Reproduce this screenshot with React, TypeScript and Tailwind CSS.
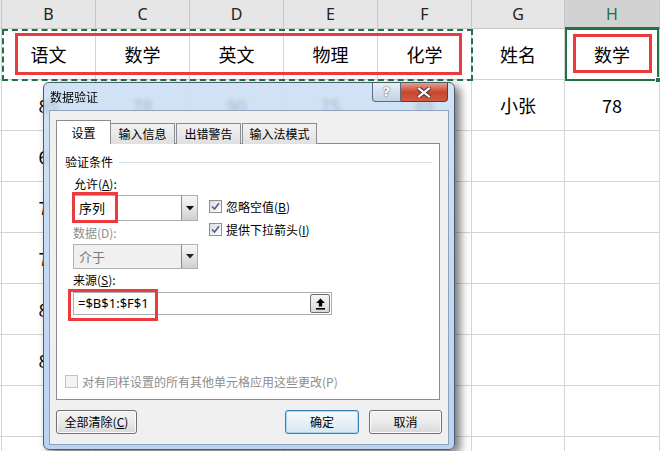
import React from "react";

const CJK = { fontFamily: '"Noto Sans CJK SC", "Noto Sans", sans-serif' };
const UI = { fontFamily: '"Noto Sans CJK SC", "Noto Sans", sans-serif' };

const headers = ["", "B", "C", "D", "E", "F", "G", "H"];
const rows: string[][] = [
  ["", "语文", "数学", "英文", "物理", "化学", "姓名", "数学"],
  ["", "85", "78", "90", "75", "88", "小张", "78"],
  ["", "68", "82", "", "", "", "", ""],
  ["", "72", "", "", "", "", "", ""],
  ["", "76", "", "", "", "", "", ""],
  ["", "88", "", "", "", "", "", ""],
  ["", "80", "", "", "", "", "", ""],
  ["", "", "", "", "", "", "", ""],
  ["", "", "", "", "", "", "", ""],
];

function Checkbox({ checked, disabled }: { checked?: boolean; disabled?: boolean }) {
  return (
    <div
      className={
        "w-[13px] h-[13px] border flex items-center justify-center shrink-0 " +
        (disabled
          ? "border-[#c3c3c3] bg-[#f4f4f4]"
          : "border-[#8e8f8f] bg-gradient-to-br from-[#dcdcdc] to-[#ffffff]")
      }
    >
      {checked && (
        <svg width="9" height="9" viewBox="0 0 9 9">
          <path d="M1 4.5 L3.5 7 L8 1.2" fill="none" stroke="#4a5f97" strokeWidth="1.6" />
        </svg>
      )}
    </div>
  );
}

function DropBtn({ disabled }: { disabled?: boolean }) {
  return (
    <div className="w-[16px] h-full border-l border-[#8a8a8a] bg-gradient-to-b from-[#f6f6f6] via-[#e6e6e6] to-[#cfcfcf] flex items-center justify-center">
      <svg width="8" height="5" viewBox="0 0 8 5">
        <path d="M0 0 H8 L4 4.5 Z" fill={disabled ? "#222" : "#111"} />
      </svg>
    </div>
  );
}

function WinButton({ children, focused, w }: { children: React.ReactNode; focused?: boolean; w: string }) {
  return (
    <div
      className={
        "h-[24px] rounded-[3px] border flex items-center justify-center text-[12px] text-black " +
        w +
        " " +
        (focused
          ? "border-[#3c7fb1] bg-gradient-to-b from-[#f4f9fd] via-[#e8f1f8] to-[#d8e6f1] shadow-[inset_0_0_0_1px_#a9d8f5]"
          : "border-[#707070] bg-gradient-to-b from-[#f4f4f4] via-[#ebebeb] to-[#d8d8d8] shadow-[inset_0_0_0_1px_#fcfcfc]")
      }
      style={UI}
    >
      {children}
    </div>
  );
}

export default function App() {
  return (
    <div className="relative w-[660px] h-[451px] overflow-hidden bg-white" style={CJK}>
      {/* Column header */}
      <div className="grid grid-cols-[2px_94px_94px_94px_94px_94px_93px_95px] h-[29px] bg-[#e6e6e6]">
        {headers.map((h, i) => (
          <div
            key={i}
            className={
              "flex items-center justify-center text-[16px] border-r border-[#c8c8c8] " +
              (h === "H"
                ? "bg-[#d2d2d2] text-[#217346] border-b-2 border-b-[#217346]"
                : "text-[#222] border-b border-b-[#c8c8c8]")
            }
            style={{ fontFamily: '"Noto Sans", sans-serif' }}
          >
            {h}
          </div>
        ))}
      </div>
      {/* Cells */}
      <div className="grid grid-cols-[2px_94px_94px_94px_94px_94px_93px_95px]">
        {rows.map((r, ri) =>
          r.map((c, ci) => (
            <div
              key={ri + "-" + ci}
              className="h-[51px] border-r border-b border-[#d4d4d4] flex items-center justify-center text-[18px] text-black"
            >
              {c}
            </div>
          ))
        )}
      </div>

      {/* Copy marquee around B1:F1 */}
      <div className="absolute left-[2px] top-[29px] w-[471px] h-[52px] border-2 border-dashed border-[#217346]" />
      {/* Red box around B1:F1 */}
      <div className="absolute left-[15px] top-[33px] w-[447px] h-[42px] border-[3px] border-[#ee3a3a]" />
      {/* Active cell H1 */}
      <div className="absolute left-[565px] top-[28px] w-[94px] h-[53px] border-2 border-[#217346]" />
      <div className="absolute left-[655px] top-[77px] w-[6px] h-[6px] bg-[#217346] border border-white" />
      <div className="absolute left-[573px] top-[34px] w-[79px] h-[39px] border-[3px] border-[#ee3a3a]" />

      {/* Dialog window */}
      <div className="absolute left-[43px] top-[82px] w-[412px] h-[368px] rounded-[6px] border border-[#4c5b6e] shadow-[5px_4px_10px_rgba(0,0,0,0.55)] bg-gradient-to-b from-[#c8dcf3]/80 via-[#c4daf3] to-[#b9d4f1] backdrop-blur-[2px] flex flex-col">
        {/* Title bar */}
        <div className="h-[27px] flex items-start justify-between pl-[6px] pr-[6px]">
          <div className="text-[12px] text-black mt-[5px]" style={UI}>
            数据验证
          </div>
          <div className="flex">
            <div className="w-[29px] h-[19px] border border-t-0 border-[#5b6b80] rounded-bl-[4px] bg-gradient-to-b from-[#e8eef7] via-[#d6e1ef] to-[#c2d2e6] flex items-center justify-center text-[13px] font-bold text-white [text-shadow:0_0_2px_#333]" style={{ fontFamily: '"DejaVu Sans", sans-serif' }}>
              ?
            </div>
            <div className="w-[47px] h-[19px] border border-t-0 border-l-0 border-[#5b3b35] rounded-br-[4px] bg-gradient-to-b from-[#e4a08f] via-[#c9452f] to-[#d05a3f] flex items-center justify-center">
              <svg width="14" height="11" viewBox="0 0 14 11">
                <path d="M2 1.5 L12 9.5 M12 1.5 L2 9.5" stroke="#3a3a3a" strokeWidth="4" strokeLinecap="square" />
                <path d="M2 1.5 L12 9.5 M12 1.5 L2 9.5" stroke="#ffffff" strokeWidth="2.2" strokeLinecap="square" />
              </svg>
            </div>
          </div>
        </div>
        {/* Client area */}
        <div className="ml-[5px] mr-[5px] h-[335px] bg-[#f0f0f0] border border-[#8da2bc] flex flex-col px-[6px]" style={UI}>
          {/* Tabs */}
          <div className="flex items-end h-[33px] relative z-10">
            <div className="w-[55px] h-[24px] bg-white border border-b-0 border-[#898c95] flex items-center justify-center text-[12px] text-black">
              设置
            </div>
            <div className="w-[65px] h-[21px] -ml-px border border-b-0 border-[#898c95] bg-gradient-to-b from-[#f2f2f2] to-[#e0e0e0] flex items-center justify-center text-[12px] text-black">
              输入信息
            </div>
            <div className="w-[65px] h-[21px] ml-[1px] border border-b-0 border-[#898c95] bg-gradient-to-b from-[#f2f2f2] to-[#e0e0e0] flex items-center justify-center text-[12px] text-black">
              出错警告
            </div>
            <div className="w-[75px] h-[21px] ml-[1px] border border-b-0 border-[#898c95] bg-gradient-to-b from-[#f2f2f2] to-[#e0e0e0] flex items-center justify-center text-[12px] text-black">
              输入法模式
            </div>
          </div>
          {/* Tab panel */}
          <div className="relative -mt-px w-[384px] h-[257px] bg-white border border-[#898c95] flex flex-col pl-[8px] pr-[7px] pt-[10px]">
            <div className="flex items-center h-[16px]">
              <span className="text-[12px] text-black leading-none">验证条件</span>
              <div className="flex-1 h-px bg-[#d5dfe5] ml-[6px]" />
            </div>
            <div className="flex mt-[6px]">
              <div className="flex flex-col ml-[8px] w-[125px]">
                <div className="h-[16px] flex items-center ml-[1px] text-[12px] text-black leading-none">
                  允许(<span className="underline">A</span>):
                </div>
                <div className="mt-[3px] h-[26px] border border-[#abadb3] bg-white flex">
                  <div className="flex-1 flex items-center pl-[5px] text-[13px] text-black">序列</div>
                  <DropBtn />
                </div>
                <div className="mt-[4px] h-[16px] flex items-center text-[12px] text-[#8d8d8d] leading-none">
                  数据(D):
                </div>
                <div className="mt-[3px] h-[25px] border border-[#adb2b5] bg-[#f0f0f0] flex">
                  <div className="flex-1 flex items-center pl-[5px] text-[13px] text-[#7a7a7a]">介于</div>
                  <DropBtn disabled />
                </div>
              </div>
              <div className="flex flex-col ml-[11px] mt-[24px] gap-[10px]">
                <div className="flex items-center gap-[4px] h-[13px]">
                  <Checkbox checked />
                  <span className="text-[12px] text-black leading-none">
                    忽略空值(<span className="underline">B</span>)
                  </span>
                </div>
                <div className="flex items-center gap-[4px] h-[13px]">
                  <Checkbox checked />
                  <span className="text-[12px] text-black leading-none">
                    提供下拉箭头(<span className="underline">I</span>)
                  </span>
                </div>
              </div>
            </div>
            <div className="mt-[3px] ml-[8px] h-[16px] flex items-center text-[12px] text-black leading-none">
              来源(<span className="underline">S</span>):
            </div>
            <div className="mt-[4px] ml-[8px] w-[259px] h-[23px] border border-[#abadb3] bg-white flex items-center justify-between pl-[4px] pr-[1px]">
              <span className="text-[13px] text-black" style={{ fontFamily: '"Noto Sans", sans-serif' }}>
                =$B$1:$F$1
              </span>
              <div className="w-[20px] h-[19px] rounded-[2px] border border-[#707070] bg-gradient-to-b from-[#f6f6f6] to-[#d9d9d9] flex items-center justify-center">
                <svg width="11" height="12" viewBox="0 0 11 12">
                  <path d="M5.5 0.5 L10 5 H7.2 V8.5 H3.8 V5 H1 Z" fill="#000" />
                  <rect x="1" y="10" width="9" height="1.6" fill="#000" />
                </svg>
              </div>
            </div>
            <div className="mt-[60px] flex items-center gap-[4px] h-[13px]">
              <Checkbox disabled />
              <span className="text-[12px] text-[#8d8d8d] leading-none">对有同样设置的所有其他单元格应用这些更改(P)</span>
            </div>

            {/* red highlight boxes */}
            <div className="absolute left-[15px] top-[48px] w-[46px] h-[31px] border-[3px] border-[#ee3a3a]" />
            <div className="absolute left-[11px] top-[145px] w-[90px] h-[32px] border-[3px] border-[#ee3a3a]" />
          </div>
          {/* Buttons */}
          <div className="flex mt-[10px]">
            <WinButton w="w-[81px]">
              全部清除(<span className="underline">C</span>)
            </WinButton>
            <div className="flex-1" />
            <WinButton w="w-[74px]" focused>
              确定
            </WinButton>
            <div className="w-[10px]" />
            <WinButton w="w-[73px]">取消</WinButton>
          </div>
        </div>
      </div>
    </div>
  );
}
